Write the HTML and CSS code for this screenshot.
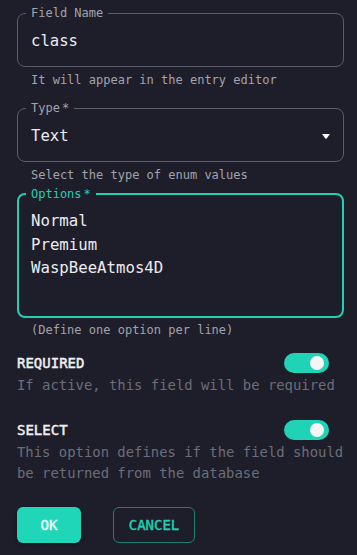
FILE: index.html
```html
<!doctype html>
<html>
  <head>
    <meta charset="utf-8">
    <meta name="viewport" content="width=device-width">
    <link rel="stylesheet" href="styles.css">
  </head>
  <body>
    <form class="form">
      <fieldset class="field">
        <legend>Field Name</legend>
        <div class="value">class</div>
      </fieldset>
      <div class="hint">It will appear in the entry editor</div>

      <fieldset class="field type">
        <legend>Type<span class="req">*</span></legend>
        <div class="value select">
          <span>Text</span>
          <svg class="caret" width="8" height="5" viewBox="0 0 8 5"><path d="M0 0h8L4.6 4.4a.8.8 0 0 1-1.2 0z" fill="#fff"/></svg>
        </div>
      </fieldset>
      <div class="hint">Select the type of enum values</div>

      <fieldset class="field options">
        <legend>Options<span class="req">*</span></legend>
        <div class="lines">Normal
Premium
WaspBeeAtmos4D</div>
      </fieldset>
      <div class="hint small">(Define one option per line)</div>

      <div class="setting first">
        <span class="label">REQUIRED</span>
        <span class="toggle on"></span>
      </div>
      <div class="desc">If active, this field will be required</div>

      <div class="setting">
        <span class="label">SELECT</span>
        <span class="toggle on"></span>
      </div>
      <div class="desc">This option defines if the field should be returned from the database</div>

      <div class="actions">
        <button type="button" class="btn ok">OK</button>
        <button type="button" class="btn cancel">CANCEL</button>
      </div>
    </form>
  </body>
</html>
```

FILE: styles.css
```css
* {
  box-sizing: border-box;
}
html, body {
  margin: 0;
  height: 100%;
}
body {
  background: #1e1e2b;
  color: #e6e6ea;
  font-family: "DejaVu Sans Mono", "Liberation Mono", monospace;
}
.form {
  padding: 6px 13px 0 17px;
}
.field {
  margin: 0;
  min-width: 0;
  padding: 0 13px 13px;
  border: 1px solid #5b5c67;
  border-radius: 8px;
}
.field legend {
  margin-left: -5px;
  padding: 0 5px;
  font-size: 12px;
  line-height: 14px;
  color: #a2a3ab;
}
.req {
  margin-left: 2px;
}
.value {
  padding: 9px 0 0;
  font-size: 15.6px;
  line-height: 24px;
  color: #ececf0;
}
.select {
  display: flex;
  justify-content: space-between;
  align-items: center;
}
.caret {
  display: block;
}
.type {
  margin-top: 13px;
}
.hint {
  margin: 5px 0 0 14px;
  font-size: 12px;
  line-height: 16px;
  color: #a2a3ab;
}
.hint.small {
  margin-top: 4px;
}
.options {
  margin-top: 4px;
  padding: 0 12px;
  border: 2px solid #22cfb3;
  height: 131px;
}
.options legend {
  color: #22cfb3;
}
.lines {
  white-space: pre-line;
  padding-top: 8px;
  font-size: 15.7px;
  line-height: 23.5px;
  color: #ececf0;
}
.setting {
  display: flex;
  justify-content: space-between;
  align-items: center;
  height: 20px;
  margin-top: 25px;
  padding-right: 15px;
}
.setting.first {
  margin-top: 15px;
}
.label {
  font-size: 14px;
  color: #f0f0f3;
  -webkit-text-stroke: 0.45px #f0f0f3;
}
.toggle {
  position: relative;
  width: 45px;
  height: 20px;
  border-radius: 10px;
  background: #20d3b7;
}
.toggle::after {
  content: "";
  position: absolute;
  top: 3px;
  right: 5px;
  width: 14px;
  height: 14px;
  border-radius: 50%;
  background: #f5f5f5;
}
.desc {
  margin-top: 2px;
  font-size: 13.9px;
  line-height: 20.3px;
  color: #6c6d78;
}
.actions {
  display: flex;
  gap: 32px;
  margin-top: 24px;
}
.btn {
  height: 36px;
  border-radius: 6px;
  font-family: inherit;
  font-size: 14px;
  padding: 0;
}
.ok {
  width: 64px;
  border: 0;
  background: #20d6b9;
  color: #effffb;
  -webkit-text-stroke: 0.45px #effffb;
  box-shadow: 0 2px 4px rgba(0, 0, 0, 0.3);
}
.cancel {
  width: 82px;
  border: 1px solid #1b7f72;
  background: transparent;
  color: #22cfb3;
  -webkit-text-stroke: 0.45px #22cfb3;
}
```
